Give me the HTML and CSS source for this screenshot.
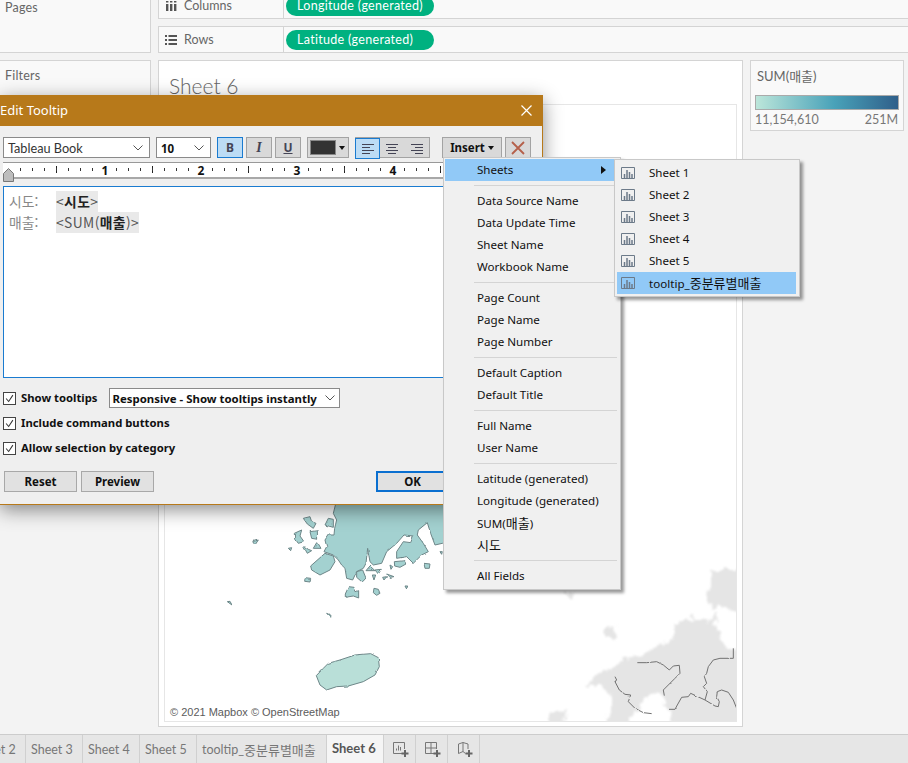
FILE: index.html
```html
<!DOCTYPE html>
<html lang="ko">
<head>
    <meta charset="UTF-8">
    <meta name="viewport" content="width=device-width, initial-scale=1.0">
    <title>Edit Tooltip</title>
    <link rel="stylesheet" href="styles.css">
</head>
<body>
<div class="app">
    <div class="workspace">
        <aside class="side">
            <div class="card pages"><span class="card-title">Pages</span></div>
            <div class="card filters"><span class="card-title">Filters</span></div>
        </aside>
        <div class="shelves">
            <div class="shelf">
                <div class="shelf-label">
                    <svg class="shelf-icon" viewBox="0 0 12 10"><path d="M1 3h2.400v7H1zM5 3h2.400v7H5zM9 3h2.400v7H9zM1 0h2.400v1.600H1zM5 0h2.400v1.600H5zM9 0h2.400v1.600H9z"/></svg>
                    Columns
                </div>
                <span class="pill">Longitude (generated)</span>
            </div>
            <div class="shelf">
                <div class="shelf-label">
                    <svg class="shelf-icon" viewBox="0 0 12 10"><path d="M0 0h2v2H0zM3.500 0H12v2H3.500zM0 4h2v2H0zM3.500 4H12v2H3.500zM0 8h2v2H0zM3.500 8H12v2H3.500z"/></svg>
                    Rows
                </div>
                <span class="pill">Latitude (generated)</span>
            </div>
        </div>
        <section class="card sheet">
            <h1 class="sheet-title">Sheet 6</h1>
            <div class="map">
                <svg class="map-art" viewBox="164 104 574 618">
                    <defs>
                        <filter id="rough-coast" x="-5%" y="-5%" width="110%" height="110%" color-interpolation-filters="sRGB">
                            <feTurbulence type="fractalNoise" baseFrequency="0.04" numOctaves="2" seed="4"/>
                            <feDisplacementMap in="SourceGraphic" scale="7" xChannelSelector="R" yChannelSelector="G"/>
                        </filter>
                        <filter id="rough-land" x="-5%" y="-5%" width="110%" height="110%" color-interpolation-filters="sRGB">
                            <feTurbulence type="fractalNoise" baseFrequency="0.035" numOctaves="3" seed="9"/>
                            <feDisplacementMap in="SourceGraphic" scale="40" xChannelSelector="R" yChannelSelector="G"/>
                            <feGaussianBlur stdDeviation="3"/>
                        </filter>
                        <filter id="rough-line" x="-5%" y="-5%" width="110%" height="110%" color-interpolation-filters="sRGB">
                            <feTurbulence type="fractalNoise" baseFrequency="0.05" numOctaves="2" seed="2"/>
                            <feDisplacementMap in="SourceGraphic" scale="6" xChannelSelector="R" yChannelSelector="G"/>
                        </filter>
                    </defs>
                    <g transform="translate(200 500) scale(0.3333)" filter="url(#rough-coast)">
                        <path class="sea-land" d="M410,0 L400,40 L410,60 L404,85 L402,105 L385,105 L375,120 L380,140 L372,155 L400,165 L415,180 L425,195 L435,205 L440,235 L458,240 L470,215 L490,205 L498,190 L503,145 L510,185 L520,195 L545,190 L560,155 L590,130 L612,105 L640,108 L632,128 L610,125 L590,155 L590,175 L620,170 L640,190 L665,165 L685,155 L670,130 L652,105 L655,90 L682,68 L692,100 L705,135 L727,130 L760,130 L760,0 Z"/>
                        <path class="sea-land" d="M400,58 L385,55 L375,75 L400,82 Z M310,55 L330,50 L335,65 L348,70 L340,85 L322,72 Z M330,95 L352,92 L353,118 L335,115 Z M283,100 L305,90 L300,108 L312,125 L295,130 L284,115 Z M340,145 L350,128 L360,145 Z M312,142 L322,160 L335,152 L325,148 L314,140 Z M158,125 L175,120 L165,135 Z M265,145 L275,143 L272,152 Z"/>
                        <path class="sea-land" d="M375,160 L400,168 L405,185 L390,210 L360,225 L335,210 L332,198 Z M470,215 L488,210 L497,232 L485,245 L470,232 Z M498,212 L510,198 L525,212 Z M525,210 L544,208 L535,222 Z M517,225 L527,225 L522,240 Z M583,185 L615,182 L618,192 L600,202 L584,198 Z M570,195 L578,200 L573,208 Z M672,190 L690,192 L688,205 L675,205 Z M560,222 L582,230 L570,232 Z M548,232 L560,230 L552,240 Z M315,236 L332,238 L330,246 L314,244 Z M446,260 L462,262 L468,275 L476,272 L476,294 L460,288 L436,292 L436,282 Z M522,265 L535,268 L540,280 L530,286 L520,278 Z M615,258 L623,258 L620,267 Z M82,305 L90,304 L96,315 Z M380,340 L393,346 L392,352 Z M720,155 L727,155 L725,163 Z"/>
                        <path class="jeju" d="M349,527 L370,505 L385,490 L420,480 L465,465 L512,461 L535,473 L538,500 L525,525 L490,545 L445,558 L410,560 L380,570 L360,555 Z"/>
                    </g>
                    <g transform="translate(560 580) scale(0.3333)">
                        <g filter="url(#rough-land)">
                            <path class="far-land" d="M260,215 L330,190 L345,140 L400,112 L445,122 L472,105 L465,150 L495,200 L520,215 L560,215 L560,450 L350,450 L325,385 L290,335 L255,355 L225,400 L205,450 L130,450 L160,360 L115,310 L80,320 L100,285 L130,280 L160,265 L190,230 L215,235 Z"/>
                            <path class="far-land" d="M450,-30 L560,-30 L560,105 L510,90 L480,75 L460,100 L445,40 Z M140,135 L165,140 L170,170 L150,178 L135,160 Z M20,30 L45,30 L40,55 L25,55 Z M-30,395 L20,390 L10,450 L-30,450 Z"/>
                        </g>
                        <g filter="url(#rough-line)">
                            <path class="border-line" d="M165,290 L170,300 L165,305 L178,330 L195,343 L212,345 L205,365 L225,385 L250,398 L275,401"/>
                            <path class="border-line" d="M232,248 L260,248 L290,245 L310,255 L328,270 L340,258 L358,256 L360,280 L345,295 L325,315 L310,330 L313,347"/>
                            <path class="border-line" d="M520,205 L520,235 L480,235 L460,240 L445,260 L440,280 L433,290 L440,310 L430,320 L442,335 L435,360 L392,340 L385,350 L365,352 L352,375 L345,388 L327,388"/>
                            <path class="border-line" d="M435,360 L465,378 L475,380 L478,365 L470,350 L472,335 L485,330 L505,337 L520,360 L530,385"/>
                        </g>
                    </g>
                </svg>
                <span class="attribution">© 2021 Mapbox © OpenStreetMap</span>
            </div>
        </section>
        <div class="card legend">
            <div class="legend-title">SUM(매출)</div>
            <div class="legend-bar"></div>
            <div class="legend-range"><span>11,154,610</span><span>251M</span></div>
        </div>
    </div>

    <div class="tabs">
        <div class="tab">Sheet 2</div>
        <div class="tab">Sheet 3</div>
        <div class="tab">Sheet 4</div>
        <div class="tab">Sheet 5</div>
        <div class="tab wide">tooltip_<span class="ko">중분류별매출</span></div>
        <div class="tab active">Sheet 6</div>
        <div class="tab icon-tab">
            <svg viewBox="0 0 16 16"><path class="tab-stroke" d="M9 11.500H.5V.5h11v6.500M3.500 8.500V6.500M5.500 8.500V3.500M7.500 8.500V5"/><path class="tab-plus" d="M12 8v7M8.500 11.500h7"/></svg>
        </div>
        <div class="tab icon-tab">
            <svg viewBox="0 0 16 16"><path class="tab-stroke" d="M9 11.500H.5V.5h11v6.500M.5 6h11M6 .5v11"/><path class="tab-plus" d="M12 8v7M8.500 11.500h7"/></svg>
        </div>
        <div class="tab icon-tab">
            <svg viewBox="0 0 16 16"><path class="tab-stroke" d="M8.500 11.500L6 9.500l-4.500 2V2L6 .5l5 1.500v5M6 .5v9"/><path class="tab-plus" d="M12 8v7M8.500 11.500h7"/></svg>
        </div>
    </div>

    <div class="dialog">
        <div class="dialog-title">
            <span>Edit Tooltip</span>
            <svg class="close" viewBox="0 0 11 11"><path d="M0.500 0.500l10 10M10.500 0.500l-10 10"/></svg>
        </div>
        <div class="dialog-body">
            <div class="toolbar">
                <div class="dropdown font-name">Tableau Book<svg class="chevron" viewBox="0 0 10 6"><path d="M0.500 0.500L5 5l4.500-4.500"/></svg></div>
                <div class="dropdown font-size">10<svg class="chevron" viewBox="0 0 10 6"><path d="M0.500 0.500L5 5l4.500-4.500"/></svg></div>
                <div class="tool-group">
                    <button class="tool on bold-tool">B</button>
                    <button class="tool italic-tool">I</button>
                    <button class="tool under-tool">U</button>
                </div>
                <button class="tool color-tool"><span class="swatch"></span><span class="caret"></span></button>
                <div class="align-group">
                    <button class="tool on align">
                        <svg viewBox="0 0 12 10"><path d="M0 .5h12M0 3.500h8M0 6.500h12M0 9.500h8"/></svg>
                    </button>
                    <button class="tool align">
                        <svg viewBox="0 0 12 10"><path d="M0 .5h12M2 3.500h8M0 6.500h12M2 9.500h8"/></svg>
                    </button>
                    <button class="tool align">
                        <svg viewBox="0 0 12 10"><path d="M0 .5h12M4 3.500h8M0 6.500h12M4 9.500h8"/></svg>
                    </button>
                </div>
                <button class="tool insert">Insert<span class="caret"></span></button>
                <button class="tool remove">
                    <svg viewBox="0 0 14 14"><path d="M1 1l12 12M13 1L1 13"/></svg>
                </button>
            </div>
            <div class="ruler">
                <span class="ruler-num">1</span>
                <span class="ruler-num">2</span>
                <span class="ruler-num">3</span>
                <span class="ruler-num">4</span>
                <svg class="ruler-thumb" viewBox="0 0 11 14"><path d="M0.500 13.500V5.500L5.500 0.500l5 5v8z"/></svg>
            </div>
            <div class="editor">
                <div class="editor-line"><span class="field-label">시도:</span><span class="field">&lt;<b>시도</b>&gt;</span></div>
                <div class="editor-line"><span class="field-label">매출:</span><span class="field">&lt;SUM(<b>매출</b>)&gt;</span></div>
            </div>
            <div class="options">
                <div class="option">
                    <span class="check"><svg viewBox="0 0 13 13"><path d="M2.500 6.500l3 3.500 5-7.500"/></svg></span>
                    <span class="option-label">Show tooltips</span>
                    <div class="dropdown tooltip-mode">Responsive - Show tooltips instantly<svg class="chevron" viewBox="0 0 10 6"><path d="M0.500 0.500L5 5l4.500-4.500"/></svg></div>
                </div>
                <div class="option">
                    <span class="check"><svg viewBox="0 0 13 13"><path d="M2.500 6.500l3 3.500 5-7.500"/></svg></span>
                    <span class="option-label">Include command buttons</span>
                </div>
                <div class="option">
                    <span class="check"><svg viewBox="0 0 13 13"><path d="M2.500 6.500l3 3.500 5-7.500"/></svg></span>
                    <span class="option-label">Allow selection by category</span>
                </div>
            </div>
            <div class="dialog-actions">
                <button class="action">Reset</button>
                <button class="action">Preview</button>
                <button class="action ok">OK</button>
            </div>
        </div>
    </div>

    <div class="menu insert-menu">
        <div class="menu-item selected">Sheets<span class="arrow"></span></div>
        <div class="menu-sep"></div>
        <div class="menu-item">Data Source Name</div>
        <div class="menu-item">Data Update Time</div>
        <div class="menu-item">Sheet Name</div>
        <div class="menu-item">Workbook Name</div>
        <div class="menu-sep"></div>
        <div class="menu-item">Page Count</div>
        <div class="menu-item">Page Name</div>
        <div class="menu-item">Page Number</div>
        <div class="menu-sep"></div>
        <div class="menu-item">Default Caption</div>
        <div class="menu-item">Default Title</div>
        <div class="menu-sep"></div>
        <div class="menu-item">Full Name</div>
        <div class="menu-item">User Name</div>
        <div class="menu-sep"></div>
        <div class="menu-item">Latitude (generated)</div>
        <div class="menu-item">Longitude (generated)</div>
        <div class="menu-item"><span>SUM(<span class="ko">매출</span>)</span></div>
        <div class="menu-item"><span class="ko">시도</span></div>
        <div class="menu-sep"></div>
        <div class="menu-item">All Fields</div>
    </div>

    <div class="menu sheets-menu">
        <div class="menu-item"><svg class="sheet-icon" viewBox="0 0 14 12"><path class="box" d="M.5 .5h13v11H.5z"/><path class="bars" d="M3.500 11V7M6 11V3M8.500 11V5M11 11V7"/></svg>Sheet 1</div>
        <div class="menu-item"><svg class="sheet-icon" viewBox="0 0 14 12"><path class="box" d="M.5 .5h13v11H.5z"/><path class="bars" d="M3.500 11V7M6 11V3M8.500 11V5M11 11V7"/></svg>Sheet 2</div>
        <div class="menu-item"><svg class="sheet-icon" viewBox="0 0 14 12"><path class="box" d="M.5 .5h13v11H.5z"/><path class="bars" d="M3.500 11V7M6 11V3M8.500 11V5M11 11V7"/></svg>Sheet 3</div>
        <div class="menu-item"><svg class="sheet-icon" viewBox="0 0 14 12"><path class="box" d="M.5 .5h13v11H.5z"/><path class="bars" d="M3.500 11V7M6 11V3M8.500 11V5M11 11V7"/></svg>Sheet 4</div>
        <div class="menu-item"><svg class="sheet-icon" viewBox="0 0 14 12"><path class="box" d="M.5 .5h13v11H.5z"/><path class="bars" d="M3.500 11V7M6 11V3M8.500 11V5M11 11V7"/></svg>Sheet 5</div>
        <div class="menu-item selected"><svg class="sheet-icon" viewBox="0 0 14 12"><path class="box" d="M.5 .5h13v11H.5z"/><path class="bars" d="M3.500 11V7M6 11V3M8.500 11V5M11 11V7"/></svg><span>tooltip_<span class="ko">중분류별매출</span></span></div>
    </div>
</div>
</body>
</html>
```

FILE: styles.css
```css
* { margin: 0; padding: 0; box-sizing: border-box; }
body { font-family: Lato, "Noto Sans CJK KR", sans-serif; background: #f3f3f3; color: #666; overflow: hidden; }
button { font-family: inherit; cursor: pointer; }
.app { position: relative; width: 908px; height: 763px; overflow: hidden; }

/* workspace behind the dialog */
.workspace { display: grid; grid-template-columns: 152px 585px 158px; grid-template-rows: 61px 667px; column-gap: 7px; row-gap: 7px; margin: -8px 0 0 -1px; height: 742px; }
.card { background: #f9f9f9; border: 1px solid #d4d4d4; }
.side { grid-row: 1 / 3; display: flex; flex-direction: column; gap: 7px; }
.pages { height: 61px; padding: 5px 5px 0; line-height: 16px; }
.filters { height: 380px; padding: 5px 5px 0; line-height: 16px; }
.card-title { font-size: 12.500px; color: #666; letter-spacing: 0.2px; }
.shelves { grid-column: 2 / 4; display: flex; flex-direction: column; gap: 7px; }
.shelf { height: 27px; display: flex; align-items: center; background: #f9f9f9; border: 1px solid #d4d4d4; margin-right: -10px; }
.shelf-label { width: 125px; height: 100%; display: flex; align-items: center; gap: 7px; padding-left: 6px; border-right: 1px solid #d4d4d4; font-size: 12.5px; color: #666; }
.shelf-icon { width: 12px; height: 10px; fill: #555; }
.pill { margin-left: 2px; width: 148px; height: 20px; line-height: 20px; border-radius: 10px; background: #00b180; color: #fff; font-size: 12.5px; padding-left: 11px; letter-spacing: 0.3px; }

.sheet { background: #fff; padding: 0 5px 4px; display: flex; flex-direction: column; }
.sheet-title { font-weight: 300; font-size: 21px; color: #666; height: 43px; padding: 12px 0 0 5px; line-height: 26px; }
.map { position: relative; flex: 1; border: 1px solid #e6e6e6; overflow: hidden; }
.map-art { position: absolute; left: -1px; top: -1px; width: 574px; height: 618px; }
.sea-land { fill: #a3d1d0; stroke: #6c8688; stroke-width: 3; stroke-linejoin: round; }
.jeju { fill: #b9dfd8; stroke: #6c8688; stroke-width: 3; stroke-linejoin: round; }
.far-land { fill: #e5e5e5; }
.border-line { fill: none; stroke: #707070; stroke-width: 3; }
.attribution { position: absolute; left: 2px; bottom: 1px; padding: 0 3px; font-family: "Liberation Sans", sans-serif; font-size: 11px; line-height: 16px; color: #5c5c5c; background: rgba(255, 255, 255, 0.6); }

.legend { width: 154px; height: 71px; background: #f9f9f9; padding: 7px 4px 8px 3px; }
.legend-title { font-size: 13px; color: #666; padding-left: 3px; height: 27px; line-height: 16px; }
.legend-bar { height: 15px; margin-left: 1px; border: 1px solid #aaa; background: linear-gradient(90deg, #bce6da, #49a2b9 55%, #2f5f8a); }
.legend-range { display: flex; justify-content: space-between; font-size: 12.500px; color: #777; margin-top: 2px; padding: 0 1px; }

/* sheet tabs */
.tabs { height: 29px; display: flex; margin-left: -31px; background: #e6e6e6; border-top: 1px solid #ccc; font-size: 12.500px; color: #777; }
.tab { width: 57px; display: flex; align-items: center; padding-left: 5px; border-right: 1px solid #d0d0d0; white-space: nowrap; }
.tab.wide { width: 130px; }
.tab.active { background: #f5f5f5; color: #555; font-weight: 700; font-size: 13px; padding-bottom: 2px; }
.icon-tab { width: 32px; padding: 1px 0 0 9px; }
.icon-tab svg { width: 16px; height: 16px; }
.tab-stroke { fill: none; stroke: #777; }
.tab-plus { fill: none; stroke: #666; stroke-width: 2; }

/* dialog */
.dialog { position: absolute; left: 0; top: 95px; width: 543px; height: 410px; background: #efefef; border: 1px solid #b7791a; border-left: 0; border-top: 0; box-shadow: 0 5px 18px rgba(0, 0, 0, 0.45); font-family: "Noto Sans", "Noto Sans CJK KR", sans-serif; color: #111; }
.dialog-title { height: 31px; background: #b7791a; color: #fff; font-size: 13px; display: flex; justify-content: space-between; align-items: center; padding: 0 10px 2px 0; }
.close { width: 11px; height: 11px; stroke: #fff; stroke-width: 1.2; fill: none; margin-top: 2px; }
.dialog-body { padding: 11px 0 0 3px; }
.toolbar { display: flex; height: 21px; }
.dropdown { display: flex; align-items: center; justify-content: space-between; height: 100%; background: #fff; border: 1px solid #8a8a8a; padding: 1px 6px 0 4px; white-space: nowrap; }
.chevron { width: 10px; height: 6px; fill: none; stroke: #555; }
.font-name { width: 147px; font-family: Lato, sans-serif; font-size: 12.700px; color: #333; }
.font-size { width: 55px; margin-left: 6px; font-weight: 700; font-size: 11.5px; }
.tool { height: 21px; width: 26px; background: #d9d9d9; border: 1px solid #a3a3a3; color: #445; display: flex; align-items: center; justify-content: center; }
.tool.on { background: #bcdcf5; border-color: #1a7bd0; }
.tool-group { display: flex; gap: 3px; margin-left: 6px; }
.bold-tool { font-weight: 700; font-size: 12px; }
.italic-tool { font-family: "Liberation Serif", serif; font-style: italic; font-weight: 700; font-size: 14px; }
.under-tool { text-decoration: underline; font-weight: 700; font-size: 12px; }
.color-tool { width: 42px; margin-left: 6px; gap: 3px; padding: 0 3px 0 2px; justify-content: flex-start; }
.swatch { width: 26px; height: 15px; background: #333; border: 1px solid #888; }
.caret { display: inline-block; border: 3.500px solid transparent; border-top: 4px solid #111; border-bottom: 0; }
.align-group { display: flex; width: 75px; margin-left: 6px; background: #d9d9d9; border: 1px solid #a3a3a3; border-left: 0; height: 21px; }
.align { flex: 1; width: auto; border: 0; background: transparent; }
.align.on { flex: none; width: 25px; border: 1px solid #1a7bd0; background: #bcdcf5; }
.align svg { width: 12px; height: 10px; stroke: #445; fill: none; }
.insert { width: 60px; margin-left: 12px; gap: 3px; color: #111; font-weight: 700; font-size: 11.500px; }
.remove { margin-left: 3px; }
.remove svg { width: 14px; height: 14px; stroke: #b5604a; stroke-width: 1.800; fill: none; }

.ruler { position: relative; height: 17px; margin-top: 4px; width: 532px; padding-left: 54px; display: flex; background-color: #fff; border-top: 1px solid #999; border-bottom: 2px solid #a8a8a8;
    background-image: repeating-linear-gradient(90deg, #333 0 1px, transparent 1px 12px), repeating-linear-gradient(90deg, #222 0 1px, transparent 1px 96px);
    background-size: 100% 3px, 100% 7px; background-position: 17px 5px, 53px 3px; background-repeat: no-repeat; }
.ruler-num { width: 96px; height: 12px; margin-top: 2px; text-align: center; font-size: 12px; line-height: 12px; font-weight: 700; color: #111; display: flex; justify-content: center; }
.ruler-num { background: linear-gradient(#fff, #fff) center / 10px 100% no-repeat; }
.ruler-thumb { position: absolute; left: 0; top: 5px; width: 11px; height: 14px; fill: #bdbdbd; stroke: #777; }

.editor { height: 192px; width: 532px; margin-top: 7px; background: #fff; border: 1px solid #1a7bd0; padding-top: 4px; font-family: "Noto Sans CJK KR", sans-serif; font-size: 13.800px; color: #555; }
.editor-line { display: flex; height: 21px; line-height: 21px; padding-left: 5px; }
.field-label { width: 47px; color: #888; }
.field { background: #e9e9e9; letter-spacing: 0.4px; }
.field b { color: #222; }

.options { margin-top: 10px; display: flex; flex-direction: column; gap: 5px; }
.option { display: flex; align-items: center; height: 20px; }
.check { width: 13px; height: 13px; background: #fff; border: 1px solid #444; margin-right: 5px; display: flex; }
.check svg { width: 11px; height: 11px; stroke: #333; fill: none; stroke-width: 1.200; }
.option-label { font-size: 11.300px; font-weight: 700; padding-bottom: 2px; }
.tooltip-mode { width: 231px; margin-left: 11px; font-size: 11.400px; font-weight: 700; padding: 0 4px 0 3px; }

.dialog-actions { display: flex; gap: 4px; margin: 13px 0 0 1px; }
.action { width: 73px; height: 21px; background: #e1e1e1; border: 1px solid #a8a8a8; font-family: inherit; font-size: 11.500px; font-weight: 700; color: #111; }
.ok { margin-left: 218px; border: 2px solid #0a6fd0; }

/* insert menu and its submenu */
.menu { position: absolute; background: #f0f0f0; border: 1px solid #c8c8c8; box-shadow: 3px 3px 3px rgba(0, 0, 0, 0.4); font-family: "Noto Sans", "Noto Sans CJK KR", sans-serif; font-size: 11.600px; color: #111; padding: 1px; }
.insert-menu { left: 443px; top: 157px; width: 178px; height: 433px; }
.menu-item { height: 22px; line-height: 22px; padding-left: 32px; display: flex; align-items: center; white-space: nowrap; }
.menu-item.selected { background: #91c9f7; }
.menu-sep { height: 1px; margin: 4px 2px 4px 29px; background: #d4d4d4; }
.arrow { margin-left: auto; margin-right: 13px; border: 4px solid transparent; border-left: 5px solid #111; border-right: 0; }
.ko { font-size: 13px; }
.sheets-menu { left: 614px; top: 159px; width: 186px; height: 138px; padding: 2px 3px 2px 2px; }
.sheets-menu .menu-item { padding-left: 4px; }
.sheet-icon { width: 14px; height: 12px; margin-right: 14px; fill: none; }
.sheet-icon .box { stroke: #6c7a89; }
.sheet-icon .bars { stroke: #6c7a89; stroke-width: 1.500; }
```
